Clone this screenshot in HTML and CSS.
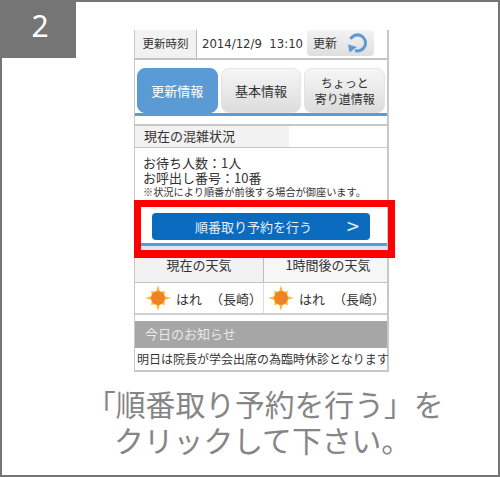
FILE: index.html
```html
<!DOCTYPE html>
<html lang="ja">
<head>
<meta charset="UTF-8">
<title>順番取り予約</title>
<link rel="stylesheet" href="styles.css">
</head>
<body>
<div class="slide">
    <div class="step">2</div>
    <div class="phone">
        <div class="update-row">
            <div class="update-label">更新時刻</div>
            <div class="update-time">2014/12/9&nbsp;&nbsp;13:10</div>
            <div class="update-btn">更新
                <svg class="reload" viewBox="0 0 20 20" width="20" height="20">
                    <path d="M3.5 6 A8 8 0 1 1 8 17.5" fill="none" stroke="#5b9bd5" stroke-width="3"/>
                    <path d="M1 11.5 L10 14 L2.5 19.5 Z" fill="#5b9bd5"/>
                </svg>
            </div>
        </div>
        <div class="tabs">
            <div class="tab active">更新情報</div>
            <div class="tab">基本情報</div>
            <div class="tab small">ちょっと<br>寄り道情報</div>
        </div>
        <div class="status-head"><div class="status-title">現在の混雑状況</div></div>
        <div class="status-body">
            <p>お待ち人数：1人</p>
            <p>お呼出し番号：10番</p>
            <p class="note">※状況により順番が前後する場合が御座います。</p>
        </div>
        <div class="action">
            <div class="reserve-btn"><span>順番取り予約を行う</span><span class="arrow">&gt;</span></div>
        </div>
        <div class="weather-head">
            <div class="weather-title">現在の天気</div>
            <div class="weather-title">1時間後の天気</div>
        </div>
        <div class="weather-row">
            <div class="weather-cell">
                <svg class="sun" viewBox="0 0 26 26" width="26" height="26">
                    <path d="M13 0 L15 7 L20 6 L19 11 L26 13 L19 15 L20 20 L15 19 L13 26 L11 19 L6 20 L7 15 L0 13 L7 11 L6 6 L11 7 Z" fill="#fdb92e"/>
                    <circle cx="13" cy="13" r="7" fill="#f08224"/>
                </svg>
                <span>はれ</span><span class="place">（長崎）</span>
            </div>
            <div class="weather-cell">
                <svg class="sun" viewBox="0 0 26 26" width="26" height="26">
                    <path d="M13 0 L15 7 L20 6 L19 11 L26 13 L19 15 L20 20 L15 19 L13 26 L11 19 L6 20 L7 15 L0 13 L7 11 L6 6 L11 7 Z" fill="#fdb92e"/>
                    <circle cx="13" cy="13" r="7" fill="#f08224"/>
                </svg>
                <span>はれ</span><span class="place">（長崎）</span>
            </div>
        </div>
        <div class="notice-head">今日のお知らせ</div>
        <div class="notice-body">明日は院長が学会出席の為臨時休診となります</div>
        <div class="highlight"></div>
    </div>
    <div class="caption">
        <p class="line1">「順番取り予約を行う」を</p>
        <p class="line2">クリックして下さい。</p>
    </div>
</div>
</body>
</html>
```

FILE: styles.css
```css
* {
    box-sizing: border-box;
}
body {
    margin: 0;
    font-family: "Noto Sans CJK JP", "DejaVu Sans", sans-serif;
    color: #333;
    background: #fff;
}
p {
    margin: 0;
}
.slide {
    position: relative;
    width: 500px;
    height: 477px;
    border: 2px solid #757575;
    overflow: hidden;
}
.step {
    position: absolute;
    left: -2px;
    top: -2px;
    width: 76px;
    height: 58px;
    padding-left: 4px;
    background: #757575;
    color: #fff;
    font-family: "Noto Sans", sans-serif;
    font-size: 30px;
    line-height: 51px;
    text-align: center;
}
.phone {
    position: relative;
    width: 255px;
    margin: 28px 0 0 132px;
    border-left: 1px solid #c8c8c8;
    border-right: 2px solid #c8c8c8;
    font-size: 13px;
    line-height: 15px;
}
.update-row {
    display: flex;
    align-items: center;
    height: 30px;
    border-bottom: 2px solid #c4c4c4;
}
.update-label {
    width: 62px;
    height: 100%;
    background: #f2f2f2;
    border-right: 1px solid #bbb;
    font-size: 11.5px;
    line-height: 27px;
    text-align: center;
}
.update-time {
    width: 110px;
    padding-left: 5px;
    font-family: "DejaVu Sans", sans-serif;
    font-size: 11.7px;
    white-space: nowrap;
}
.update-btn {
    display: flex;
    align-items: center;
    justify-content: space-between;
    width: 67px;
    height: 26px;
    margin-top: -3px;
    padding: 0 7px 0 6px;
    background: linear-gradient(#f3f3f3, #dedede);
    border-radius: 4px;
    font-size: 12px;
}
.tabs {
    display: flex;
    gap: 3px;
    height: 56px;
    padding: 8px 2px 0;
    border-bottom: 3px solid #5b9bd5;
}
.tab {
    flex: 1;
    display: flex;
    align-items: center;
    justify-content: center;
    background: linear-gradient(#f6f6f6, #dcdcdc);
    border: 1px solid #e4e4e4;
    border-radius: 8px;
    text-align: center;
}
.tab.active {
    background: #5b9bd5;
    border-color: #5b9bd5;
    color: #fff;
}
.tab.small {
    font-size: 12px;
    line-height: 16px;
}
.status-head {
    height: 24px;
    margin-top: 8px;
    border-top: 2px solid #c8c8c8;
    border-bottom: 1px solid #c8c8c8;
}
.status-title {
    width: 154px;
    height: 100%;
    padding-left: 9px;
    background: #f2f2f2;
    line-height: 20px;
}
.status-body {
    height: 52px;
    padding: 7px 8px 0;
    line-height: 15px;
}
.note {
    font-size: 10.2px;
    line-height: 13px;
    white-space: nowrap;
}
.action {
    height: 46px;
    padding: 13px 17px 0;
    border-bottom: 3px solid #5b9bd5;
    box-shadow: 0 4px 0 #dce6f1;
}
.reserve-btn {
    display: flex;
    justify-content: space-between;
    align-items: center;
    width: 218px;
    height: 27px;
    padding: 0 10px 0 43px;
    background: #0b6bbf;
    border-radius: 4px;
    color: #e4eef8;
}
.arrow {
    font-family: "DejaVu Sans", sans-serif;
    font-size: 17px;
}
.weather-head {
    display: flex;
    height: 33px;
    margin-top: 4px;
    border-bottom: 1px solid #c4c4c4;
}
.weather-title {
    width: 129px;
    background: #f2f2f2;
    border-right: 1px solid #bbb;
    line-height: 29px;
    text-align: center;
}
.weather-title + .weather-title {
    flex: 1;
    padding-left: 5px;
    border-right: 0;
    background: #f6f6f6;
}
.weather-row {
    display: flex;
    height: 32px;
    border-bottom: 2px solid #d0d0d0;
}
.weather-cell {
    display: flex;
    align-items: center;
    width: 129px;
    padding-left: 10px;
    border-right: 1px solid #ddd;
    white-space: nowrap;
}
.weather-cell + .weather-cell {
    flex: 1;
    padding-left: 4px;
    border-right: 0;
}
.sun {
    flex: none;
    margin-right: 5px;
}
.place {
    margin-left: 8px;
}
.notice-head {
    height: 27px;
    margin-top: 6px;
    padding-left: 10px;
    background: #a6a6a6;
    color: #e8e8e8;
    line-height: 25px;
}
.notice-body {
    height: 24px;
    padding-left: 2px;
    border-bottom: 2px solid #c8c8c8;
    font-size: 12px;
    line-height: 21px;
    white-space: nowrap;
}
.highlight {
    position: absolute;
    left: -1px;
    top: 170px;
    width: 261px;
    height: 58px;
    border: 7px solid #f00;
    border-bottom-width: 8px;
}
.caption {
    color: #868686;
    font-size: 29.8px;
    line-height: 36px;
    margin-top: 13px;
    white-space: nowrap;
}
.line1 {
    margin-left: 84px;
}
.line2 {
    margin-left: 112px;
}
```
